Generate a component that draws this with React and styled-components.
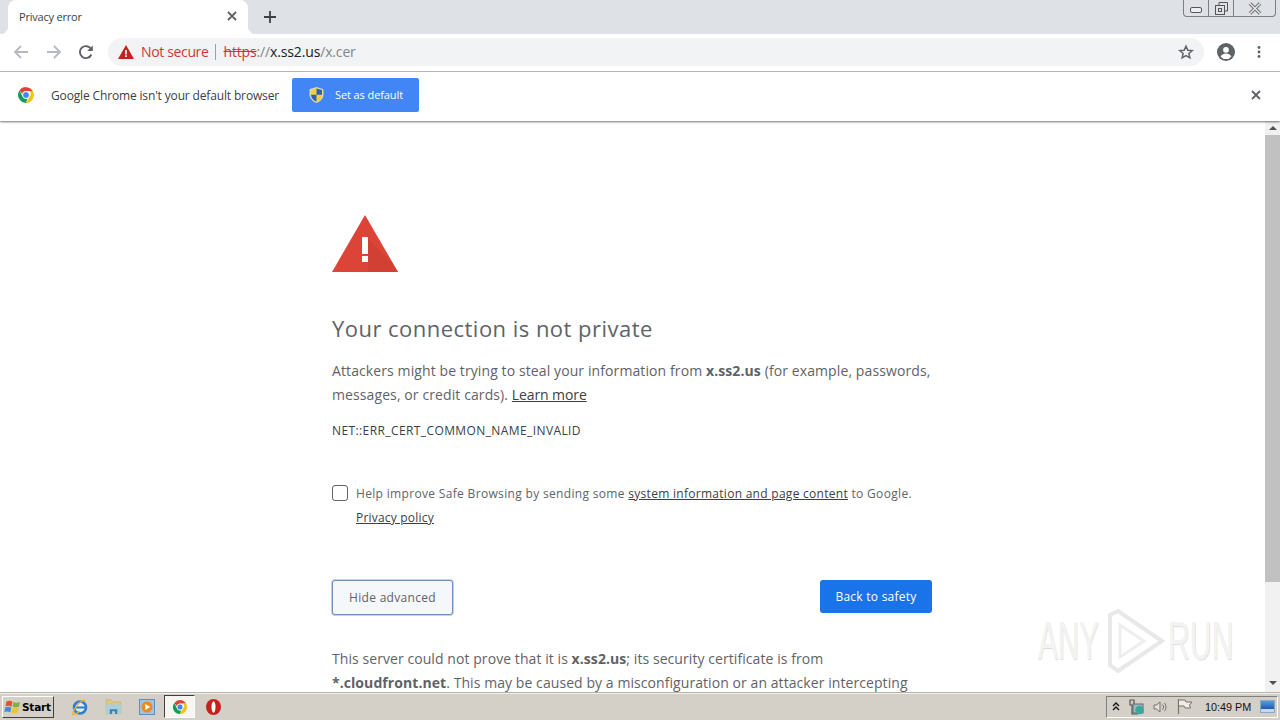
import React from 'react'
import styled, { createGlobalStyle } from 'styled-components'

const GlobalStyle = createGlobalStyle`
  html, body {
    margin: 0;
    padding: 0;
    height: 720px;
    overflow: hidden;
    background: #fff;
  }
  * {
    box-sizing: border-box;
  }
  body {
    font-family: "Open Sans", "Noto Sans", sans-serif;
    color: #333;
  }
`

const Screen = styled.div`
  width: 1280px;
  height: 720px;
  display: flex;
  flex-direction: column;
  overflow: hidden;
  position: relative;
`

const TabStrip = styled.div`
  height: 34px;
  background: #dee1e6;
  display: flex;
  align-items: flex-end;
  padding-left: 8px;
  position: relative;
`

const Tab = styled.div`
  width: 240px;
  height: 34px;
  background: #fff;
  border-radius: 8px 8px 0 0;
  display: flex;
  align-items: center;
  justify-content: space-between;
  padding: 0 11px 2px 11px;
  font-size: 11px;
  letter-spacing: -0.2px;
  color: #3c4043;
  position: relative;

  &::before,
  &::after {
    content: '';
    position: absolute;
    bottom: 0;
    width: 8px;
    height: 8px;
  }

  &::before {
    left: -8px;
    background: radial-gradient(circle at 0 0, transparent 8px, #fff 8.5px);
  }

  &::after {
    right: -8px;
    background: radial-gradient(circle at 100% 0, transparent 8px, #fff 8.5px);
  }
`

const NewTab = styled.div`
  margin-left: 16px;
  height: 34px;
  display: flex;
  align-items: center;
`

const WindowButtons = styled.div`
  position: absolute;
  top: 0;
  right: 4px;
  width: 93px;
  height: 17px;
  display: flex;
  border: 1px solid #7a8088;
  border-top: 0;
  border-radius: 0 0 4px 4px;
`

const WindowButton = styled.div`
  flex: ${p => p.$grow};
  display: flex;
  align-items: center;
  justify-content: center;
  border-left: ${p => (p.$first ? '0' : '1px solid #7a8088')};
`

const Toolbar = styled.div`
  height: 38px;
  background: #fff;
  border-bottom: 1px solid #bdbdbd;
  display: flex;
  align-items: center;
  padding: 0 0 1px 13px;
`

const NavIcons = styled.div`
  display: flex;
  align-items: center;
  gap: 16.5px;
  width: 95px;
`

const Omnibox = styled.div`
  width: 1096px;
  height: 28px;
  background: #f1f3f4;
  border-radius: 14px;
  display: flex;
  align-items: center;
  padding: 0 10px 1px 10px;
`

const NotSecure = styled.span`
  margin-left: 7px;
  font-size: 14px;
  letter-spacing: -0.35px;
  color: #cb3a35;
`

const Divider = styled.span`
  width: 1px;
  height: 16px;
  background: #9aa0a6;
  margin: 0 8px 0 6px;
`

const Url = styled.div`
  flex: 1;
  font-size: 14px;
  letter-spacing: -0.15px;
  color: #80868b;
`

const Scheme = styled.span`
  color: #cb3a35;
  text-decoration: line-through;
`

const Host = styled.span`
  color: #202124;
`

const ToolbarEnd = styled.div`
  display: flex;
  align-items: center;
  gap: 22px;
  margin-left: 13px;
`

const Infobar = styled.div`
  height: 49px;
  background: #fff;
  box-shadow: 0 1px 2px rgba(0, 0, 0, 0.55);
  display: flex;
  align-items: center;
  padding: 0 19px 3px 17px;
  position: relative;
  z-index: 2;
`

const InfoText = styled.span`
  margin-left: 16px;
  font-size: 12px;
  letter-spacing: -0.15px;
  color: #3c4043;
`

const DefaultButton = styled.div`
  margin-left: 13px;
  width: 127px;
  height: 34px;
  background: #4285f4;
  border-radius: 2px;
  display: flex;
  align-items: center;
  padding: 0 0 1px 17px;
  color: #fff;
  font-size: 11px;
  letter-spacing: -0.1px;
`

const DefaultLabel = styled.span`
  margin-left: 11px;
`

const InfoClose = styled.div`
  margin-left: auto;
  display: flex;
`

const Viewport = styled.div`
  flex: 1;
  min-height: 0;
  display: flex;
  overflow: hidden;
  position: relative;
`

const Page = styled.main`
  flex: 1;
  padding: 94px 0 0 332px;
  overflow: hidden;
`

const Column = styled.div`
  width: 600px;
  font-size: 14px;
  line-height: 24px;
  letter-spacing: 0.1px;
  color: #5f6368;
`

const Heading = styled.h1`
  margin: 38px 0 13px;
  font-size: 22px;
  line-height: 36px;
  font-weight: 400;
  color: #5f6368;
  letter-spacing: 0.47px;
`

const Paragraph = styled.p`
  margin: 0;
`

const Link = styled.span`
  color: #3c4043;
  text-decoration: underline;
  letter-spacing: ${p => p.$tracking || 'inherit'};
`

const ErrorCode = styled.div`
  margin-top: 12px;
  font-size: 12px;
  letter-spacing: 0.4px;
  color: #3c4043;
`

const OptIn = styled.div`
  margin-top: 39px;
  display: flex;
  font-size: 12px;
  letter-spacing: 0.33px;
  color: #5f6368;
`

const Box = styled.span`
  flex: none;
  width: 16px;
  height: 16px;
  margin: 3px 8px 0 0;
  border: 1px solid #5f6368;
  border-radius: 3px;
  background: #fff;
`

const Actions = styled.div`
  margin-top: 50px;
  display: flex;
  justify-content: space-between;
  align-items: flex-start;
`

const AdvancedButton = styled.div`
  width: 121px;
  height: 35px;
  background: #f5f8fb;
  border: 1px solid #6e8fc2;
  box-shadow: 0 0 0 1px #c3d2e8;
  border-radius: 3px;
  display: flex;
  align-items: center;
  justify-content: center;
  padding-top: 1px;
  font-size: 12px;
  letter-spacing: 0.3px;
  color: #5f6368;
`

const SafetyButton = styled.div`
  width: 112px;
  height: 33px;
  background: #1a73e8;
  border-radius: 3px;
  display: flex;
  align-items: center;
  justify-content: center;
  padding-top: 1px;
  font-size: 12px;
  letter-spacing: 0.25px;
  color: #fff;
`

const Details = styled.p`
  margin: 32px 0 0;
  letter-spacing: 0.07px;
`

const Scrollbar = styled.div`
  width: 15px;
  background: #f1f1f1;
  display: flex;
  flex-direction: column;
  align-items: center;
  justify-content: space-between;
  padding: 5px 0 7px;
  position: relative;
`

const Thumb = styled.div`
  position: absolute;
  top: 14px;
  left: 0;
  right: 0;
  height: 447px;
  background: #c1c1c1;
`

const Arrow = styled.span`
  width: 0;
  height: 0;
  border-left: 4px solid transparent;
  border-right: 4px solid transparent;
  ${p => (p.$up ? 'border-bottom: 4px solid #505050;' : 'border-top: 4px solid #505050;')}
`

const Watermark = styled.div`
  position: absolute;
  left: 1038px;
  top: 488px;
  display: flex;
  align-items: center;
  color: #f3f3f3;
  font-family: "Liberation Sans", sans-serif;
  font-size: 53px;
  line-height: 64px;
  text-shadow: 1px 1px 1px #dcdcdc;
`

const WatermarkWord = styled.span`
  display: inline-block;
  transform: scaleX(${p => p.$scale});
  transform-origin: left center;
  width: ${p => p.$width}px;
`

const Taskbar = styled.div`
  height: 28px;
  background: #d4d0c8;
  border-top: 1px solid #b8b4ac;
  box-shadow: inset 0 1px 0 #f2f0ea;
  display: flex;
  align-items: center;
  padding-left: 2px;
`

const StartButton = styled.div`
  width: 52px;
  height: 22px;
  background: #d4d0c8;
  border: 1px solid;
  border-color: #fff #404040 #404040 #fff;
  display: flex;
  align-items: center;
  padding-left: 1px;
  font-family: "DejaVu Sans", sans-serif;
  font-weight: 700;
  font-size: 10.5px;
  letter-spacing: -0.2px;
  color: #000;
`

const QuickLaunch = styled.div`
  display: flex;
  align-items: center;
  margin-left: 8px;
`

const TaskIcon = styled.div`
  width: ${p => p.$width || 34}px;
  height: 24px;
  display: flex;
  align-items: center;
  justify-content: center;
`

const ActiveTask = styled(TaskIcon)`
  background: #f6f5f2;
  border: 1px solid;
  border-color: #404040 #fff #fff #404040;
  height: 23px;
  padding-left: 1px;
`

const Tray = styled.div`
  margin-left: auto;
  margin-right: 2px;
  width: 172px;
  height: 22px;
  border: 1px solid;
  border-color: #808080 #fff #fff #808080;
  display: flex;
  align-items: center;
  padding-left: 5px;
  font-family: "Liberation Sans", sans-serif;
  font-size: 10.8px;
  color: #111;
`

const TrayIcons = styled.div`
  display: flex;
  align-items: center;
  gap: 8px;
`

const Clock = styled.span`
  margin-left: 12px;
  white-space: nowrap;
`

const ShowDesktop = styled.div`
  margin-left: 9px;
  width: 15px;
  height: 13px;
  background: linear-gradient(#5b9bd8, #1f5ea8 70%, #c8d8e8 70%);
  border: 1px solid #8aa8c8;
`

const Close = ({ size = 10, color = '#5f6368', width = 1.8 }) => (
  <svg width={size} height={size} viewBox="0 0 10 10">
    <path d="M1 1l8 8M9 1l-8 8" stroke={color} strokeWidth={width} fill="none" />
  </svg>
)

const Back = ({ flip }) => (
  <svg width="16" height="16" viewBox="0 0 16 16" style={flip ? { transform: 'scaleX(-1)' } : undefined}>
    <path d="M15 8H2M8 2L2 8l6 6" stroke="#b6b9bd" strokeWidth="1.8" fill="none" />
  </svg>
)

const Reload = () => (
  <svg width="16" height="16" viewBox="0 0 16 16">
    <path d="M13.4 10.5a6 6 0 1 1-.2-5.2" stroke="#5f6368" strokeWidth="1.9" fill="none" />
    <path d="M14.8 1.5v5.6H9.2z" fill="#5f6368" />
  </svg>
)

const Warn = () => (
  <svg width="16" height="14" viewBox="0 0 16 14">
    <path d="M8 0l8 14H0z" fill="#c5221f" />
    <path d="M7.2 5h1.6v4.4H7.2zM7.2 10.3h1.6v1.6H7.2z" fill="#fff" />
  </svg>
)

const Star = () => (
  <svg width="16" height="16" viewBox="0 0 24 24">
    <path
      d="M12 3.2l2.7 6.1 6.6.6-5 4.4 1.5 6.5L12 17.4l-5.8 3.4 1.5-6.5-5-4.4 6.6-.6z"
      fill="none"
      stroke="#5f6368"
      strokeWidth="2.2"
    />
  </svg>
)

const Avatar = () => (
  <svg width="18" height="18" viewBox="0 0 18 18">
    <circle cx="9" cy="9" r="9" fill="#5f6368" />
    <circle cx="9" cy="6.8" r="2.9" fill="#fff" />
    <path d="M3.6 13.4c1-2.1 3.3-3 5.4-3s4.4.9 5.4 3a6.8 6.8 0 0 1-10.8 0z" fill="#fff" />
  </svg>
)

const Dots = () => (
  <svg width="4" height="14" viewBox="0 0 4 14">
    <circle cx="2" cy="2.5" r="1.4" fill="#5f6368" />
    <circle cx="2" cy="7" r="1.4" fill="#5f6368" />
    <circle cx="2" cy="11.5" r="1.4" fill="#5f6368" />
  </svg>
)

const ChromeLogo = ({ size = 18 }) => (
  <svg width={size} height={size} viewBox="0 0 48 48">
    <path d="M24 3a21 21 0 0 1 18.2 10.5H24a10.5 10.5 0 0 0-10 7.5L6.8 11.8A21 21 0 0 1 24 3z" fill="#db4437" />
    <path d="M42.2 13.5A21 21 0 0 1 24 45l9-15.500a10.5 10.5 0 0 0 0-16z" fill="#f4c20d" />
    <path d="M6.8 11.8L15.5 29a10.5 10.5 0 0 0 12 5.2L24 45A21 21 0 0 1 6.8 11.8z" fill="#0f9d58" />
    <circle cx="24" cy="24" r="9" fill="#4285f4" stroke="#fff" strokeWidth="2" />
  </svg>
)

const Shield = () => (
  <svg width="15" height="16" viewBox="0 0 15 16">
    <path d="M7.5 0.5l6.5 2v5c0 4-3 6.800-6.500 8C4 14.300 1 11.500 1 7.500v-5z" fill="#f4d03f" stroke="#dfe6f0" strokeWidth="0.8" />
    <path d="M7.5 1.500v6.200H2c0 3.200 2.300 5.500 5.500 6.800V7.700h5.500V3.100z" fill="#2f62b5" />
  </svg>
)

const DangerTriangle = () => (
  <svg width="66" height="57" viewBox="0 0 66 57" style={{ display: 'block' }}>
    <path d="M33 0l33 57H0z" fill="#db4437" />
    <path d="M36 24L61.5 49.2 66 57H36z" fill="#c8392e" opacity="0.45" />
    <path d="M30 22h6v17h-6zM30 41h6v6h-6z" fill="#fff" />
  </svg>
)

const WindowsFlag = () => (
  <svg width="18" height="16" viewBox="0 0 17 16">
    <path d="M2 2.5c2-1 4-1 6 .2L7 7.5c-2-1-4-1-6-.2z" fill="#e0552b" />
    <path d="M9 2.900c2 1 4 1 6.500 0l-1 4.800c-2.500 1-4.500 1-6.500-.1z" fill="#7eb636" />
    <path d="M.8 8.300c2-.7 4-.7 6 .2l-1 4.900c-2-1-4-1-6-.2z" fill="#3f8fd8" />
    <path d="M7.800 8.700c2 1 4 1 6.500 0l-1 4.800c-2.500 1-4.500 1-6.500-.1z" fill="#f3c32b" />
  </svg>
)

const IeIcon = () => (
  <svg width="17" height="18" viewBox="0 0 17 18">
    <circle cx="9" cy="9.5" r="6" fill="#d8ecf8" stroke="#2f7fd0" strokeWidth="2.6" />
    <path d="M3 9.5h12" stroke="#2f7fd0" strokeWidth="2" />
    <path d="M14.5 2C10 2 3 9 1.5 16c2 1.500 5-1 7-3" stroke="#e8b62c" strokeWidth="1.4" fill="none" />
  </svg>
)

const FolderIcon = () => (
  <svg width="17" height="17" viewBox="0 0 16 16">
    <path d="M1 1.5h5l1 2h8V15H1z" fill="#e0c878" stroke="#c8b070" strokeWidth="0.5" />
    <path d="M1 6h14v9H1z" fill="#a8d0dc" />
    <path d="M4.5 15v-4.500h7V15h-2v-2.500h-3V15z" fill="#3f7fae" />
  </svg>
)

const PlayerIcon = () => (
  <svg width="16" height="16" viewBox="0 0 16 16">
    <rect x="0.5" y="0.5" width="15" height="15" fill="#9cc4e8" stroke="#5a90c8" />
    <circle cx="8" cy="8" r="5.5" fill="#ec8a1c" />
    <path d="M6.3 5l5 3-5 3z" fill="#fff" />
  </svg>
)

const OperaIcon = () => (
  <svg width="15" height="16" viewBox="0 0 15 16">
    <ellipse cx="7.5" cy="8" rx="7.5" ry="8" fill="#c8201c" />
    <ellipse cx="7.5" cy="8" rx="2" ry="5.8" fill="#fff" />
  </svg>
)

const TrayChevron = () => (
  <svg width="8" height="9" viewBox="0 0 8 9">
    <path d="M1 4l3-3 3 3M1 8l3-3 3 3" stroke="#111" strokeWidth="1.4" fill="none" />
  </svg>
)

const NetworkIcon = () => (
  <svg width="17" height="16" viewBox="0 0 17 16">
    <path d="M2 1h4v5H2zM4 6v9h6" fill="none" stroke="#555" strokeWidth="1.2" />
    <rect x="5" y="5" width="10" height="9" fill="#9db8c0" stroke="#5c6a70" />
    <circle cx="11.5" cy="11" r="4.2" fill="#3aa89a" />
  </svg>
)

const SpeakerIcon = () => (
  <svg width="16" height="14" viewBox="0 0 16 14">
    <path d="M1 5h2.500L7 2v10L3.500 9H1z" fill="#e4e2dc" stroke="#77736c" />
    <path d="M9.500 4.500a3.500 3.500 0 0 1 0 5M11.500 3a6 6 0 0 1 0 8" fill="none" stroke="#77736c" />
  </svg>
)

const FlagIcon = () => (
  <svg width="16" height="15" viewBox="0 0 16 15">
    <path d="M1.5 0v15" stroke="#77736c" strokeWidth="1.2" />
    <path d="M2 1h6l1 2h6l-2.500 3 1 3H8L7 7H2" fill="#eeece6" stroke="#77736c" />
  </svg>
)

const OutlineClose = () => (
  <svg width="14" height="13" viewBox="0 0 14 13">
    <path d="M2 1.5l10 10M12 1.5l-10 10" stroke="#6a6a6a" strokeWidth="3.4" fill="none" />
    <path d="M2 1.5l10 10M12 1.5l-10 10" stroke="#e4e6ea" strokeWidth="1.6" fill="none" />
  </svg>
)

const App = () => {
  return (
    <Screen>
      <GlobalStyle />
      <TabStrip>
        <Tab>
          <span>Privacy error</span>
          <Close />
        </Tab>
        <NewTab>
          <svg width="12" height="12" viewBox="0 0 12 12">
            <path d="M6 0v12M0 6h12" stroke="#3c4043" strokeWidth="1.8" />
          </svg>
        </NewTab>
        <WindowButtons>
          <WindowButton $grow={25} $first>
            <svg width="12" height="6" viewBox="0 0 12 6" style={{ marginTop: 4 }}>
              <rect x="0.5" y="0.5" width="11" height="5" rx="1.5" fill="#eceef1" stroke="#555" />
            </svg>
          </WindowButton>
          <WindowButton $grow={25}>
            <svg width="13" height="13" viewBox="0 0 13 13">
              <path d="M4 3V.5h8.500V9H10" fill="none" stroke="#555" />
              <rect x="0.5" y="3.5" width="9" height="9" fill="#dee1e6" stroke="#555" />
              <rect x="3.5" y="6.5" width="3" height="3" fill="none" stroke="#555" />
            </svg>
          </WindowButton>
          <WindowButton $grow={42}>
            <OutlineClose />
          </WindowButton>
        </WindowButtons>
      </TabStrip>
      <Toolbar>
        <NavIcons>
          <Back />
          <Back flip />
          <Reload />
        </NavIcons>
        <Omnibox>
          <Warn />
          <NotSecure>Not secure</NotSecure>
          <Divider />
          <Url>
            <Scheme>https</Scheme>://<Host>x.ss2.us</Host>/x.cer
          </Url>
          <Star />
        </Omnibox>
        <ToolbarEnd>
          <Avatar />
          <Dots />
        </ToolbarEnd>
      </Toolbar>
      <Infobar>
        <ChromeLogo />
        <InfoText>Google Chrome isn't your default browser</InfoText>
        <DefaultButton>
          <Shield />
          <DefaultLabel>Set as default</DefaultLabel>
        </DefaultButton>
        <InfoClose>
          <Close />
        </InfoClose>
      </Infobar>
      <Viewport>
        <Page>
          <Column>
            <DangerTriangle />
            <Heading>Your connection is not private</Heading>
            <Paragraph>
              Attackers might be trying to steal your information from <strong>x.ss2.us</strong> (for example,
              passwords, messages, or credit cards). <Link $tracking="-0.1px">Learn more</Link>
            </Paragraph>
            <ErrorCode>NET::ERR_CERT_COMMON_NAME_INVALID</ErrorCode>
            <OptIn>
              <Box />
              <span>
                Help improve Safe Browsing by sending some <Link $tracking="0.28px">system information and page content</Link> to Google.
                <br />
                <Link $tracking="0.2px">Privacy policy</Link>
              </span>
            </OptIn>
            <Actions>
              <AdvancedButton>Hide advanced</AdvancedButton>
              <SafetyButton>Back to safety</SafetyButton>
            </Actions>
            <Details>
              This server could not prove that it is <strong>x.ss2.us</strong>; its security certificate is from{' '}
              <strong>*.cloudfront.net</strong>. This may be caused by a misconfiguration or an attacker intercepting
            </Details>
          </Column>
        </Page>
        <Scrollbar>
          <Arrow $up />
          <Thumb />
          <Arrow />
        </Scrollbar>
        <Watermark>
          <WatermarkWord $scale={0.56} $width={64}>ANY</WatermarkWord>
          <svg width="66" height="64" viewBox="0 0 66 64">
            <path d="M8 6v50l8 6 44-30L16 2z" fill="none" stroke="#e8e8e8" strokeWidth="4" />
            <path d="M18 16v32l24-16z" fill="none" stroke="#eeeeee" strokeWidth="3" />
          </svg>
          <WatermarkWord $scale={0.57} $width={62}>RUN</WatermarkWord>
        </Watermark>
      </Viewport>
      <Taskbar>
        <StartButton>
          <WindowsFlag />
          Start
        </StartButton>
        <QuickLaunch>
          <TaskIcon><IeIcon /></TaskIcon>
          <TaskIcon><FolderIcon /></TaskIcon>
          <TaskIcon><PlayerIcon /></TaskIcon>
          <ActiveTask $width={31}><ChromeLogo size={16} /></ActiveTask>
          <TaskIcon $width={37}><OperaIcon /></TaskIcon>
        </QuickLaunch>
        <Tray>
          <TrayIcons>
            <TrayChevron />
            <NetworkIcon />
            <SpeakerIcon />
            <FlagIcon />
          </TrayIcons>
          <Clock>10:49 PM</Clock>
          <ShowDesktop />
        </Tray>
      </Taskbar>
    </Screen>
  )
}

export default App
